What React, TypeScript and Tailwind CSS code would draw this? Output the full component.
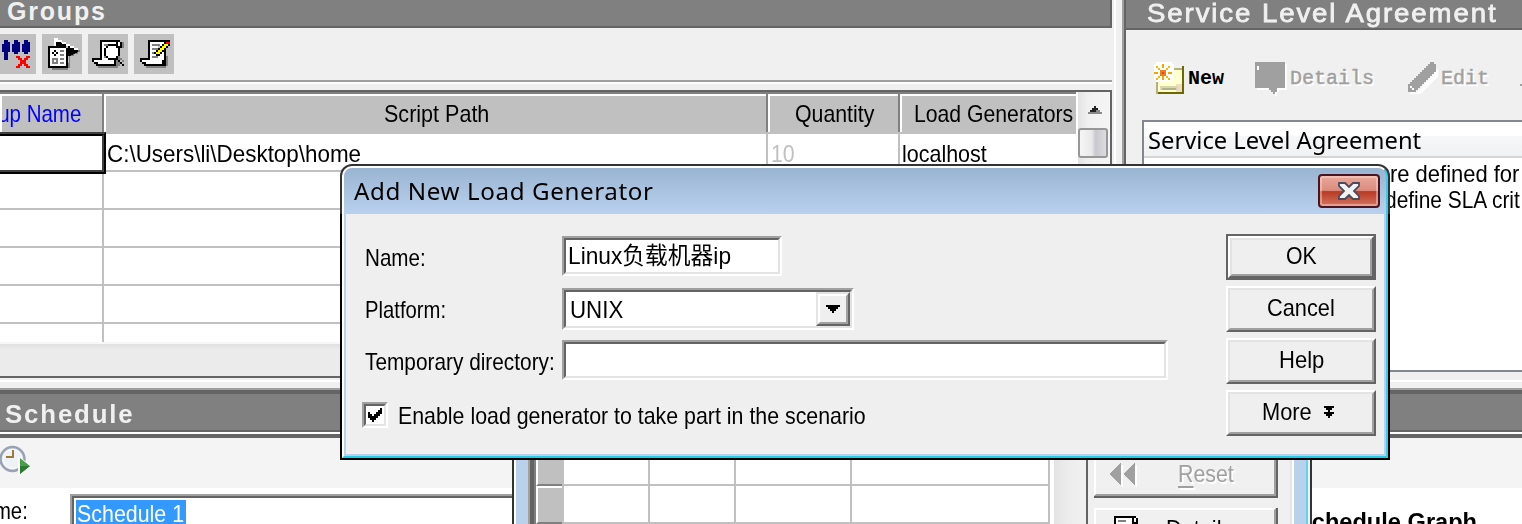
import { useLayoutEffect, useRef, useState } from "react";
import type { ReactNode } from "react";

/* Text stretched horizontally to fill the width of its box. */
function Fit({ className = "", children }: { className?: string; children: ReactNode }) {
  const box = useRef<HTMLSpanElement>(null);
  const inner = useRef<HTMLSpanElement>(null);
  const [scale, setScale] = useState(1);
  useLayoutEffect(() => {
    if (box.current && inner.current && inner.current.offsetWidth > 0) {
      setScale(box.current.clientWidth / inner.current.offsetWidth);
    }
  }, []);
  return (
    <span ref={box} className={`block shrink-0 whitespace-nowrap ${className}`}>
      <span ref={inner} className="inline-block origin-left" style={{ transform: `scaleX(${scale})` }}>
        {children}
      </span>
    </span>
  );
}

function Tool({ className = "w-10", children }: { className?: string; children: ReactNode }) {
  return (
    <div className={`flex h-10 shrink-0 justify-end overflow-hidden bg-[#c0c0c0] ${className}`}>
      <svg viewBox="0 0 20 20" className="h-10 w-10 shrink-0" shapeRendering="crispEdges">{children}</svg>
    </div>
  );
}

function RemoveGroupIcon() {
  return (
    <>
      {[3, 8, 13].map((x) => (
        <g key={x} fill="#000080">
          <rect x={x + 1} y="3" width="2" height="1" />
          <rect x={x} y="5" width="4" height="4" />
          <rect x={x + 1} y="4" width="3" height="1" />
          <rect x={x + 1} y="9" width="2" height={x === 3 ? 4 : 1} />
        </g>
      ))}
      {[0, 1, 2, 3, 4, 5].map((i) => (
        <g key={i} fill="#f00">
          <rect x={10 + i} y={11 + i} width="2" height="1" />
          <rect x={15 - i} y={11 + i} width="2" height="1" />
        </g>
      ))}
    </>
  );
}

function RunGroupIcon() {
  return (
    <>
      <path d="M14 8h5v1h-1v1h-2v1h-2v6h-1v1H5v-1h8z" fill="#808080" />
      <path d="M7 3l11 5.2v.8l-2 1-2 1h-1V6H7z" fill="#000" />
      <path d="M6 2h2v1h2v1h2v1h2v1h2v1h2v1h-2V7h-2V6h-2V5h-2V4H7v2H6z" fill="#fff" />
      <path d="M3 6h9v1h1v10H3z" fill="#000" />
      <path d="M4 7h8v9H4z" fill="#fff" />
      <path d="M6 8h1v1h1v1H7v1H6v-1H5V9h1z" fill="#000" />
      <path d="M6 9h1v1H6z" fill="#fff" />
      <path d="M9 8h2v1H9zM9 10h2v1H9zM9 12h2v1H9zM9 14h2v1H9zM5 12h3v3H5z" fill="#808080" />
      <path d="M6 13h1v1H6z" fill="#fff" />
    </>
  );
}

function Scroll() {
  return (
    <>
      <path d="M17 4h1v3h-1zM14 7h2v9h-1v1H5v-1h9z" fill="#808080" />
      <path d="M6 3h10v1h1v3h-3V5h0v11H4v-1H3v-1H2v-2h4z" fill="#000" />
      <path d="M7 4h7v9h-1v1H8v-1H7z" fill="#fff" />
      <path d="M3 13h6v1h4v1H5v-1H3z" fill="#fff" />
      <path d="M15 4h1v2h-1z" fill="#fff" />
      <path d="M8 5h4v1H8zM8 7h3v1H8zM8 9h3v1H8zM8 11h4v1H8z" fill="#808080" />
    </>
  );
}

function ViewScriptIcon() {
  return (
    <>
      <Scroll />
      <path d="M10 5h4v1h1v1h1v4h-1v1h-1v1h-4v-1H9v-1H8V7h1V6h1z" fill="#000" />
      <path d="M10 6h4v1h1v4h-1v1h-4v-1H9V7h1z" fill="#fff" />
      <path d="M14 12h1v1h1v1h1v1h1v1h-1v-1h-1v-1h-1v-1h-1z" fill="#000" />
      <path d="M15 11h1v1h1v1h1v1h-1v-1h-1v-1h-1z" fill="#808080" />
    </>
  );
}

function EditScriptIcon() {
  return (
    <>
      <g transform="translate(1 0)"><Scroll /></g>
      <path d="M15 4h4v4h-2v3h-5V6h3z" fill="#c0c0c0" />
      <path d="M12 7h3v6h-3z" fill="#fff" />
      <path d="M15 8h1v8h-1z" fill="#000" />
      {[0, 1, 2, 3, 4, 5].map((i) => (
        <g key={i}>
          <rect x={16 - i} y={3 + i} width="2" height="3" fill="#000" />
          <rect x={15 - i} y={4 + i} width="3" height="1" fill="#000" />
        </g>
      ))}
      {[0, 1, 2, 3, 4].map((i) => (
        <rect key={i} x={15 - i} y={5 + i} width="2" height="1" fill="#ff0" />
      ))}
      <path d="M16 4h2v1h-2z" fill="#f00" />
    </>
  );
}

function VScrollTop() {
  return (
    <div className="flex flex-1 flex-col items-start border-l-2 border-white bg-[linear-gradient(90deg,#e3e3e3,#f0f0f0_30%,#f5f5f5)]">
      <svg viewBox="0 0 14 8" className="ml-2.5 mt-3.5 h-2 w-3.5" shapeRendering="crispEdges">
        <path d="M6 0h2v2h2v2h2v2h2v2H0V6h2V4h2V2h2z" fill="#888" />
        <path d="M6 0h2v2h2v2H8v2H2V4h2V2h2z" fill="#222" />
      </svg>
      <div className="mt-3.5 h-[30px] w-[30px] rounded-[3px] border-2 border-[#979797] bg-[linear-gradient(90deg,#f5f5f5,#e9e9eb_45%,#c8c8ce_60%,#dcdce0)]" />
    </div>
  );
}

function Head({ className, children }: { className: string; children?: ReactNode }) {
  return (
    <div className={`flex h-[38px] shrink-0 items-center overflow-hidden border-l-2 border-t-2 border-white bg-[#c0c0c0] leading-[38px] ${className}`}>
      {children}
    </div>
  );
}

function GroupsPanel() {
  return (
    <section className="flex h-[382px] w-[1116px] shrink-0 flex-col border-b-2 border-r-2 border-white pr-0.5">
      <div className="h-7 shrink-0 overflow-hidden border-b-2 border-r-2 border-[#646464] bg-[#808080] pl-[7px]">
        <Fit className="-mt-[3px] w-[100px] text-[25px] font-bold leading-[28px] tracking-[1.8px] text-[#f0f0f0]">Groups</Fit>
      </div>
      <div className="flex h-[52px] shrink-0 gap-1.5 pt-1.5">
        <Tool className="w-9"><RemoveGroupIcon /></Tool>
        <Tool><RunGroupIcon /></Tool>
        <Tool><ViewScriptIcon /></Tool>
        <Tool><EditScriptIcon /></Tool>
      </div>
      <div className="h-1 shrink-0 border-b-2 border-t-2 border-b-white border-t-[#a0a0a0]" />
      <div className="mt-1.5 flex h-72 shrink-0 flex-col border-b-2 border-r-2 border-t-2 border-[#646464]">
        <div className="flex h-[250px] shrink-0 overflow-hidden">
          <div className="w-[1076px] shrink-0 border-t-2 border-[#808080] bg-white">
            <div className="flex h-10 border-b-2 border-[#c0c0c0] bg-[#808080]">
              <Head className="mr-0.5 w-[102px] justify-end border-l-0 pr-[21px] text-[#0000ff]">
                <Fit className="w-[117px]">Group Name</Fit>
              </Head>
              <Head className="mr-0.5 w-[662px] justify-center"><Fit className="w-[105px]">Script Path</Fit></Head>
              <Head className="mr-0.5 w-[130px] justify-center"><Fit className="w-[79px]">Quantity</Fit></Head>
              <Head className="w-[176px] pl-3"><Fit className="w-[159px]">Load Generators</Fit></Head>
            </div>
            <div className="flex h-[38px] leading-[40px]">
              <div className="relative w-[104px] shrink-0 border-b-2 border-[#c0c0c0]">
                <div className="absolute -top-0.5 left-0 h-[42px] w-[106px] border-2 border-l-0 border-b-black border-r-black border-t-[#404040]">
                  <div className="h-full border-2 border-l-0 border-b-[#404040] border-r-[#404040] border-t-black" />
                </div>
              </div>
              <div className="w-[664px] shrink-0 border-b-2 border-r-2 border-[#c0c0c0] pl-[3px]">
                <Fit className="w-[254px]">{"C:\\Users\\li\\Desktop\\home"}</Fit>
              </div>
              <div className="w-[132px] shrink-0 border-b-2 border-r-2 border-[#c0c0c0] pl-[3px] text-[#c0c0c0]"><Fit className="w-6">10</Fit></div>
              <div className="flex-1 border-b-2 border-[#c0c0c0] pl-0.5"><Fit className="w-[85px]">localhost</Fit></div>
            </div>
            {[0, 1, 2, 3, 4].map((r) => (
              <div key={r} className="flex h-[38px]">
                <div className="w-[104px] border-b-2 border-r-2 border-[#c0c0c0]" />
                <div className="w-[664px] border-b-2 border-r-2 border-[#c0c0c0]" />
                <div className="flex-1 border-b-2 border-[#c0c0c0]" />
              </div>
            ))}
          </div>
          <VScrollTop />
        </div>
        <div className="flex-1 bg-[linear-gradient(#f8f8f8_2px,#e0e0e0_2px,#ebebeb_8px)]" />
      </div>
    </section>
  );
}

function NewIcon() {
  return (
    <svg viewBox="0 0 15 17" className="h-[34px] w-[30px]" shapeRendering="crispEdges">
      <path d="M1 3h14v13H1z" fill="#b8b07c" />
      <path d="M2 4h12v11H2z" fill="#ffffd0" />
      <path d="M14 2h1v14H2v-1h12z" fill="#6b6800" />
      <path d="M11 11h3v4h-3z" fill="#f0dcc0" />
      <path d="M3 12h9v2H3z" fill="#d8d8a8" />
      <path d="M4 13h7v1H4z" fill="#b0b090" />
      <path d="M1 0h8v1h1v8H9v1H1V9H0V1h1z" fill="#fff" />
      <path d="M4 1h1v2H4zM4 7h1v2H4zM0 5h2v1H0zM7 5h2v1H7z" fill="#f5a400" />
      <path d="M1 2h1v1h1v1H2V3H1zM7 2h1v1H7v1H6V3h1zM2 7h1v1H2v1H1V8h1zM6 7h1v1h1v1H7V8H6z" fill="#ffb400" />
      <path d="M3 4h3v3H3z" fill="#f07a20" />
      <path d="M4 5h1v1H4z" fill="#d84c10" />
    </svg>
  );
}

function SlaPanel() {
  return (
    <section className="flex h-[382px] flex-1 flex-col overflow-hidden border-b-2 border-b-white">
      <div className="flex h-[380px] border-l-2 border-[#a0a0a0]">
        <div className="flex flex-1 flex-col border-l-2 border-[#646464]">
          <div className="h-[30px] shrink-0 border-b-2 border-[#646464] bg-[#808080] pl-[21px]">
            <Fit className="-mt-0.5 w-[350px] text-[26px] leading-[30px] tracking-[1.8px] text-[#f0f0f0] [-webkit-text-stroke:0.8px_#f0f0f0]">Service Level Agreement</Fit>
          </div>
          <div className="flex h-[90px] shrink-0 pl-7 pt-8 font-['Liberation_Mono',monospace] text-[20px] leading-[34px] text-[#a0a0a0]">
            <NewIcon />
            <Fit className="ml-1 w-9 font-bold text-black">New</Fit>
            <svg viewBox="0 0 16 17" className="ml-[31px] h-[34px] w-8" shapeRendering="crispEdges">
              <path d="M1 1h15v13h-4v1h-1v2h-1v-1H9v-1H8v-1H1z" fill="#fff" />
              <path d="M0 0h15v13h-4v2h-1v1H9v-1H8v-1H7v-1H0z" fill="#a0a0a0" />
              <path d="M1 2h1v2H1z" fill="#fff" />
            </svg>
            <Fit className="ml-[3px] w-[84px] [-webkit-text-stroke:0.4px_#a0a0a0] [text-shadow:2px_2px_0_#fff]">Details</Fit>
            <svg viewBox="0 0 15 16" className="ml-[34px] h-8 w-[30px]" shapeRendering="crispEdges">
              <path d="M15 3v4L6 16H1v-1h4z" fill="#fff" />
              <path d="M11 0h2v1h1v4h-1v1h-1v1h-1v1h-1v1H9v1H8v1H7v1H6v1H5v1H4v1H0v-4h1v-1h1V9h1V8h1V7h1V6h1V5h1V4h1V3h1V2h1V1h1z" fill="#a0a0a0" />
              <path d="M1 12h1v1h1v1H2v-1H1z" fill="#fff" />
            </svg>
            <Fit className="ml-[3px] w-12 [-webkit-text-stroke:0.4px_#a0a0a0] [text-shadow:2px_2px_0_#fff]">Edit</Fit>
            <div className="ml-[31px] mt-[22px] h-0.5 w-2 shrink-0 bg-[#a0a0a0]" />
          </div>
          <div className="ml-4 h-[252px] shrink-0 overflow-hidden border-b-2 border-l-2 border-t-2 border-[#828790] bg-white">
            <div className="h-9 border-b-2 border-[#d5d5d5] bg-[linear-gradient(#fff_14px,#f6f7f8_14px,#f0f1f3)] pl-1">
              <Fit className="w-[273px] font-['Noto_Sans',sans-serif] text-[24px] leading-[36px]">Service Level Agreement</Fit>
            </div>
            <div className="flex h-[52px] flex-col pl-[241px] pt-[3px] leading-[26px]">
              <Fit className="ml-[5px] w-[129px]">re defined for</Fit>
              <Fit className="w-[135px]">define SLA crit</Fit>
            </div>
          </div>
        </div>
      </div>
    </section>
  );
}

function SchedulePanel() {
  return (
    <section className="h-[136px]">
      <div className="h-[46px] border-b-2 border-t-2 border-b-white border-t-[#a0a0a0]">
        <div className="h-[42px] border-b-2 border-t-4 border-[#646464] bg-[#808080] pl-[5px]">
          <Fit className="w-[130px] text-[25px] font-bold leading-[41px] tracking-[1.8px] text-[#f0f0f0]">Schedule</Fit>
        </div>
      </div>
      <div className="h-[54px] border-t-4 border-[#646464] bg-[#f4f4f4] pt-1.5">
        <svg viewBox="0 0 30 32" className="h-8 w-[30px]">
          <circle cx="12.5" cy="15" r="12" fill="#e3e8ef" stroke="#98a2b3" strokeWidth="2.5" />
          <circle cx="12.5" cy="15" r="9.5" fill="#eef1f6" stroke="#fff" />
          <path d="M13 6v7H6" fill="none" stroke="#9b7a36" strokeWidth="2" />
          <path d="M18 12l14 10-14 10z" fill="#fff" />
          <path d="M20 14l10 8-10 8z" fill="#4aa04a" />
          <path d="M20 30l10-8H20z" fill="#2f7a33" />
        </svg>
      </div>
      <div className="flex h-9 bg-white pt-1.5">
        <div className="flex w-7 shrink-0 justify-end overflow-hidden text-[23px] leading-[34px]"><Fit className="w-[60px]">Name:</Fit></div>
        <div className="ml-[42px] w-[500px] shrink-0 border-l-2 border-t-2 border-[#a0a0a0]">
          <div className="h-full border-l-2 border-t-2 border-[#646464] pl-0.5 pt-0.5">
            <div className="h-[26px] w-[110px] bg-[#3399ff] pl-px leading-[27px] text-white"><Fit className="w-[107px]">Schedule 1</Fit></div>
          </div>
        </div>
        <div className="ml-[726px] pt-3"><Fit className="w-[181px] text-[24px] font-bold leading-[32px]">Schedule Graph</Fit></div>
      </div>
    </section>
  );
}

function ScheduleWindow() {
  return (
    <div className="absolute left-[512px] top-[440px] flex h-[84px] w-[800px] overflow-hidden border-l-2 border-r-2 border-[#333] bg-[#f0f0f0]">
      <div className="w-0.5 bg-white" />
      <div className="w-3 bg-[#b9d1ea]" />
      <div className="w-0.5 bg-[#a0a0a0]" />
      <div className="w-1 bg-[#646464]" />
      <div className="w-0.5 bg-[#808080]" />
      <div className="w-[514px] shrink-0 bg-white">
        {["h-[46px]", "h-[38px]"].map((h) => (
          <div key={h} className={`flex ${h}`}>
            <div className="w-[26px] border-b-2 border-l-2 border-t-2 border-b-[#808080] border-l-white border-t-white bg-[#c0c0c0]" />
            <div className="w-0.5 bg-[#c0c0c0]" />
            <div className="w-[86px] border-b-2 border-r-2 border-[#c0c0c0]" />
            <div className="w-[86px] border-b-2 border-r-2 border-[#c0c0c0]" />
            <div className="w-[116px] border-b-2 border-r-2 border-[#c0c0c0]" />
            <div className="w-[198px] border-b-2 border-r-2 border-[#c0c0c0]" />
          </div>
        ))}
      </div>
      <div className="w-1 bg-white" />
      <div className="w-8 shrink-0 bg-[linear-gradient(90deg,#e3e3e3,#ececec_40%,#f0f0f0)]" />
      <div className="w-0.5 shrink-0 bg-[#646464]" />
      <div className="flex w-[204px] shrink-0 flex-col border-r-2 border-[#e3e3e3] pl-1.5">
        <div className="h-[58px] w-[184px] shrink-0 border-b-2 border-r-2 border-[#646464]">
          <div className="flex h-full border-b-2 border-l-2 border-r-2 border-b-[#a0a0a0] border-l-white border-r-[#a0a0a0] pl-[13px] pt-[22px]">
            <svg viewBox="0 0 30 26" className="h-[26px] w-[30px]" shapeRendering="crispEdges">
              <path d="M14 2v24L2 14zM28 2v24L16 14z" fill="#fff" />
              <path d="M12 0v24L0 12zM26 0v24L14 12z" fill="#a0a0a0" />
            </svg>
            <Fit className="ml-[39px] w-[56px] leading-[24px] text-[#a0a0a0] [text-shadow:2px_2px_0_#fff]">
              <span className="underline decoration-2 underline-offset-4">R</span>eset
            </Fit>
          </div>
        </div>
        <div className="mt-2.5 h-9 w-[184px] shrink-0 border-r-2 border-[#646464]">
          <div className="flex h-full border-l-2 border-r-2 border-t-2 border-l-white border-r-[#a0a0a0] border-t-white pl-4 pt-1.5">
            <svg viewBox="0 0 14 10" className="h-5 w-7" shapeRendering="crispEdges">
              <path d="M1 0h11v1h1v3H2V1H1z" fill="#000" />
              <path d="M2 1h8v9H2zM11 1h1v2h-1z" fill="#fff" />
              <path d="M1 1h1v9H1zM10 1h1v9h-1z" fill="#000" />
              <path d="M3 2h4v1H3z" fill="#808080" />
            </svg>
            <Fit className="ml-[26px] w-[66px] leading-[26px]">Details</Fit>
          </div>
        </div>
      </div>
      <div className="w-0.5 bg-white" />
      <div className="w-3 bg-[#b9d1ea]" />
      <div className="w-0.5 bg-[#5bd5f0]" />
    </div>
  );
}

function Sunken({ className, children }: { className: string; children?: ReactNode }) {
  return (
    <div className={`shrink-0 border-2 border-b-white border-l-[#a0a0a0] border-r-white border-t-[#a0a0a0] ${className}`}>
      <div className="flex h-full border-2 border-b-[#e3e3e3] border-l-[#646464] border-r-[#e3e3e3] border-t-[#646464] bg-white">{children}</div>
    </div>
  );
}

function Button({ children }: { children: ReactNode }) {
  return (
    <div className="h-[46px] shrink-0 border-2 border-b-[#646464] border-l-white border-r-[#646464] border-t-white">
      <div className="flex h-full justify-center border-2 border-b-[#a0a0a0] border-l-[#e3e3e3] border-r-[#a0a0a0] border-t-[#e3e3e3] leading-[36px]">{children}</div>
    </div>
  );
}

function Dialog() {
  return (
    <div className="absolute left-[340px] top-[164px] h-[296px] w-[1050px] rounded-t-[12px] bg-[linear-gradient(#333_50px,#000_50px)] p-0.5">
      <div className="h-full rounded-t-[10px] border-2 border-b-[#22cbe6] border-l-white border-r-[#35cdea] border-t-white bg-[linear-gradient(#99b4d1,#b9d1ee_46px,#b9d1ea_47px)]">
        <div className="flex h-full flex-col rounded-t-[8px] px-0.5 pb-0.5">
          <div className="flex h-[46px] shrink-0 justify-between pl-2 pr-1">
            <Fit className="w-[300px] font-['Noto_Sans',sans-serif] text-[24px] leading-[46px] tracking-[0.6px]">Add New Load Generator</Fit>
            <div className="mt-1.5 flex h-[34px] w-[62px] items-center justify-center rounded-[4px] border-2 border-[#4a1420] bg-[linear-gradient(#e8a99c,#dc8b7d_48%,#b93a24_52%,#d27461)] shadow-[inset_0_0_0_2px_rgba(255,220,210,0.45)]">
              <svg viewBox="0 0 24 20" className="h-5 w-6">
                <path d="M2 2h6l4 4 4-4h6v3l-5 5 5 5v3h-6l-4-4-4 4H2v-3l5-5-5-5z" fill="#f2f2f2" stroke="#4b4b5c" strokeWidth="1.8" />
              </svg>
            </div>
          </div>
          <div className="flex flex-1 justify-between bg-[#efefef] pl-4 pr-2">
            <div className="pt-[22px]">
              <div className="flex h-[52px]">
                <div className="w-[200px] pl-[3px] leading-[43px]"><Fit className="w-[61px]">Name:</Fit></div>
                <Sunken className="h-10 w-[220px]">
                  <Fit className="ml-[2px] w-[163px] font-['Liberation_Sans','Noto_Sans_CJK_SC',sans-serif] leading-[32px]">Linux负载机器ip</Fit>
                </Sunken>
              </div>
              <div className="flex h-[52px]">
                <div className="w-[200px] pl-[3px] leading-[43px]"><Fit className="w-[81px]">Platform:</Fit></div>
                <Sunken className="h-[42px] w-[292px]">
                  <Fit className="ml-1 w-[53px] leading-[36px]">UNIX</Fit>
                  <div className="ml-auto h-[34px] w-[34px] border-2 border-b-[#646464] border-l-[#e3e3e3] border-r-[#646464] border-t-[#e3e3e3]">
                    <div className="flex h-full items-center justify-center border-2 border-b-[#a0a0a0] border-l-white border-r-[#a0a0a0] border-t-white bg-[#efefef]">
                      <svg viewBox="0 0 7 4" className="h-2 w-3.5" shapeRendering="crispEdges">
                        <path d="M0 0h7v1H6v1H5v1H4v1H3V3H2V2H1V1H0z" />
                      </svg>
                    </div>
                  </div>
                </Sunken>
              </div>
              <div className="flex h-[62px]">
                <div className="w-[200px] pl-[3px] leading-[43px]"><Fit className="w-[190px]">Temporary directory:</Fit></div>
                <Sunken className="h-10 w-[606px]" />
              </div>
              <div className="flex">
                <Sunken className="h-[26px] w-[26px]">
                  <svg viewBox="0 0 9 9" className="h-[18px] w-[18px]" shapeRendering="crispEdges">
                    <path d="M1 3h1v1h1v1h1V4h1V3h1V2h1V1h1v3H7v1H6v1H5v1H4v1H3V7H2V6H1z" />
                  </svg>
                </Sunken>
                <Fit className="ml-[10px] w-[468px] leading-[28px]">Enable load generator to take part in the scenario</Fit>
              </div>
            </div>
            <div className="flex w-[150px] flex-col gap-1.5 pt-5">
              <div className="h-[46px] shrink-0 border-2 border-[#646464]">
                <div className="h-full border-2 border-b-[#646464] border-l-white border-r-[#646464] border-t-white">
                  <div className="flex h-full justify-center border-2 border-b-[#a0a0a0] border-l-[#e3e3e3] border-r-[#a0a0a0] border-t-[#e3e3e3] leading-[32px]">
                    <Fit className="w-[31px]">OK</Fit>
                  </div>
                </div>
              </div>
              <Button><Fit className="w-[68px]">Cancel</Fit></Button>
              <Button><Fit className="w-[45px]">Help</Fit></Button>
              <Button>
                <Fit className="w-[50px]">More</Fit>
                <svg viewBox="0 0 5 6" className="ml-3 mr-1.5 mt-3 h-3 w-2.5" shapeRendering="crispEdges">
                  <path d="M0 0h5v1H4v1H1V1H0zM2 2h1v1H2zM0 3h5v1H4v1H3v1H2V5H1V4H0z" />
                </svg>
              </Button>
            </div>
          </div>
        </div>
      </div>
    </div>
  );
}

export default function App() {
  return (
    <main className="relative h-[524px] w-[1522px] overflow-hidden bg-[#f0f0f0] font-['Liberation_Sans',sans-serif] text-[24px] text-black">
      <div className="flex h-[388px] items-start gap-1.5">
        <GroupsPanel />
        <SlaPanel />
      </div>
      <SchedulePanel />
      <ScheduleWindow />
      <Dialog />
    </main>
  );
}
